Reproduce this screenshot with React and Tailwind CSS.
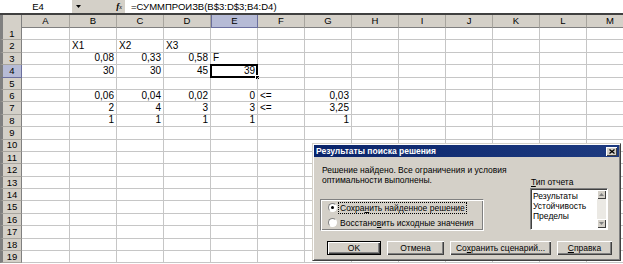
const COLS = ["A", "B", "C", "D", "E", "F", "G", "H", "I", "J", "K", "L", "M"];

// value, align (r = number, l = text)
const CELLS = {
  B2: ["X1", "l"], C2: ["X2", "l"], D2: ["X3", "l"],
  B3: ["0,08", "r"], C3: ["0,33", "r"], D3: ["0,58", "r"], E3: ["F", "l"],
  B4: ["30", "r"], C4: ["30", "r"], D4: ["45", "r"], E4: ["39", "r"],
  B6: ["0,06", "r"], C6: ["0,04", "r"], D6: ["0,02", "r"], E6: ["0", "r"], F6: ["<=", "l"], G6: ["0,03", "r"],
  B7: ["2", "r"], C7: ["4", "r"], D7: ["3", "r"], E7: ["3", "r"], F7: ["<=", "l"], G7: ["3,25", "r"],
  B8: ["1", "r"], C8: ["1", "r"], D8: ["1", "r"], E8: ["1", "r"], G8: ["1", "r"],
};

const FormulaBar = () => (
  <div className="flex h-[13px] items-stretch bg-[#d4d0c8]">
    <div className="flex w-[72px] items-center justify-center bg-white pl-[4px] text-[9.5px] leading-none">E4</div>
    <div className="flex w-[12px] items-center justify-center">
      <svg width="5" height="3" viewBox="0 0 5 3"><path d="M0 0h5L2.5 3z" fill="#000" /></svg>
    </div>
    <div className="flex w-[41px] items-center justify-end pr-[3px]">
      <span className="font-['Liberation_Serif',serif] text-[9px] italic leading-none">
        <b>f</b>
        <span className="text-[6px]">x</span>
      </span>
    </div>
    <div className="flex flex-1 items-center bg-white pl-[6px] text-[9.5px] leading-none">=СУММПРОИЗВ(B$3:D$3;B4:D4)</div>
  </div>
);

const HeaderRow = () => (
  <div className="flex h-[15px] border-t-2 border-[#404040] bg-[#d4d0c8]">
    <div className="w-[22px] shrink-0 border-r border-[#808080] border-l-[3px] border-l-[#808080]"></div>
    {COLS.map((c) => (
      <div
        key={c}
        className={`flex shrink-0 items-center justify-center border-b text-[9.5px] leading-none ${
          c === "A" ? "w-[48px]" : "w-[47px]"
        } ${
          c === "E"
            ? "border-x border-[#6b6f9e] bg-[#b6bbd6]"
            : "border-r border-b-[#808080] border-r-[#a8a59e]"
        }`}
      >
        {c}
      </div>
    ))}
  </div>
);

const Row = ({ n }) => (
  <div className="flex h-[12.4px]">
    <div
      className={`flex w-[22px] shrink-0 items-center justify-center border-l-[3px] border-l-[#808080] border-r border-b text-[9.5px] leading-none ${
        n === 4 ? "border-[#6b6f9e] bg-[#b6bbd6]" : "border-r-[#808080] border-b-[#a8a59e] bg-[#d4d0c8]"
      }`}
    >
      {n}
    </div>
    {COLS.map((c) => {
      const cell = CELLS[c + n];
      const sel = c === "E" && n === 4;
      return (
        <div
          key={c}
          className={`relative flex shrink-0 items-center overflow-visible whitespace-nowrap border-r border-b border-[#c6c6c6] px-[2px] text-[10px] leading-none ${
            c === "A" ? "w-[48px]" : "w-[47px]"
          } ${cell && cell[1] === "r" ? "justify-end" : "justify-start"}`}
        >
          {cell ? cell[0] : ""}
          {sel && (
            <>
              <div className="absolute -top-[1px] -left-[1px] -right-[1px] -bottom-[1px] border-2 border-black"></div>
              <div className="absolute -right-[3px] -bottom-[3px] h-[5px] w-[5px] border border-white bg-black"></div>
            </>
          )}
        </div>
      );
    })}
  </div>
);

const Btn = ({ children, w, def }) => (
  <div
    className={`flex h-[14px] items-center justify-center bg-[#d4d0c8] text-[8.5px] leading-none ${w} ${
      def
        ? "border border-black shadow-[inset_1px_1px_0_#fff,inset_-1px_-1px_0_#404040,inset_-2px_-2px_0_#808080]"
        : "shadow-[inset_1px_1px_0_#fff,inset_-1px_-1px_0_#404040,inset_-2px_-2px_0_#808080]"
    }`}
  >
    {children}
  </div>
);

const Radio = ({ checked }) => (
  <span className="relative inline-flex h-[9px] w-[9px] shrink-0 items-center justify-center rounded-full border border-t-[#808080] border-l-[#808080] border-r-white border-b-white bg-white">
    {checked && <span className="h-[3px] w-[3px] rounded-full bg-black"></span>}
  </span>
);

const ScrollBtn = ({ up }) => (
  <div className="flex h-[9px] w-[9px] items-center justify-center bg-[#d4d0c8] shadow-[inset_1px_1px_0_#fff,inset_-1px_-1px_0_#404040]">
    <svg width="5" height="3" viewBox="0 0 5 3">
      <path d={up ? "M0 3h5L2.5 0z" : "M0 0h5L2.5 3z"} fill="#808080" />
    </svg>
  </div>
);

const Dialog = () => (
  <div className="absolute left-[312px] top-[143px] h-[118px] w-[309px] border border-t-[#d4d0c8] border-l-[#d4d0c8] border-r-[#404040] border-b-[#404040] bg-[#d4d0c8] p-[1px] text-[8.5px] leading-[10px] shadow-[inset_1px_1px_0_#fff,inset_-1px_-1px_0_#808080]">
    <div className="flex h-[12px] items-center justify-between bg-gradient-to-r from-[#0a246a] to-[#1d3a80] pl-[2px] pr-[2px]">
      <span className="text-[8.5px] font-bold leading-none text-white">Результаты поиска решения</span>
      <div className="flex h-[9px] w-[11px] items-center justify-center bg-[#d4d0c8] shadow-[inset_1px_1px_0_#fff,inset_-1px_-1px_0_#404040]">
        <svg width="6" height="5" viewBox="0 0 6 5">
          <path d="M0.5 0.5l5 4M5.5 0.5l-5 4" stroke="#000" strokeWidth="1.3" />
        </svg>
      </div>
    </div>
    <div className="flex pl-[6px] pt-[8px]">
      <div className="w-[164px]">
        <p className="whitespace-nowrap pl-[2px]">
          Решение найдено. Все ограничения и условия
          <br />
          оптимальности выполнены.
        </p>
        <div className="mt-[14px] flex h-[32px] flex-col justify-center gap-[5px] border border-t-[#808080] border-l-[#808080] border-r-white border-b-white pl-[7px] shadow-[inset_1px_1px_0_#fff,inset_-1px_-1px_0_#808080]">
          <div className="flex items-center gap-[2px]">
            <Radio checked />
            <span className="outline-1 outline-dotted outline-black px-[1px]">
              Сохра<u>н</u>ить найденное решение
            </span>
          </div>
          <div className="flex items-center gap-[3px]">
            <Radio />
            <span>
              Восстано<u>в</u>ить исходные значения
            </span>
          </div>
        </div>
      </div>
      <div className="ml-[46px] w-[78px] pt-[12px]">
        <div className="mb-[1px] pl-[1px]">
          <u>Т</u>ип отчета
        </div>
        <div className="flex h-[42px] border border-t-[#808080] border-l-[#808080] border-r-white border-b-white bg-white shadow-[inset_1px_1px_0_#404040]">
          <div className="flex-1 pl-[2px] pt-[2px]">
            <div>Результаты</div>
            <div>Устойчивость</div>
            <div>Пределы</div>
          </div>
          <div className="flex w-[9px] flex-col justify-between bg-[#ebe9e4] mr-[1px] my-[1px]">
            <ScrollBtn up />
            <ScrollBtn />
          </div>
        </div>
      </div>
    </div>
    <div className="mt-[10px] flex gap-[6px] pl-[13px]">
      <Btn w="w-[54px]" def>OK</Btn>
      <Btn w="w-[57px]">Отмена</Btn>
      <Btn w="w-[101px]">
        Со<u>х</u>ранить сценарий...
      </Btn>
      <Btn w="w-[55px]">
        <u>С</u>правка
      </Btn>
    </div>
  </div>
);

export default function App() {
  const rows = Array.from({ length: 19 }, (_, i) => i + 1);
  return (
    <div className="relative h-[264px] w-[623px] overflow-hidden bg-white font-['Liberation_Sans',Arial,sans-serif] text-black">
      <FormulaBar />
      <HeaderRow />
      {rows.map((n) => (
        <Row key={n} n={n} />
      ))}
      <Dialog />
    </div>
  );
}
